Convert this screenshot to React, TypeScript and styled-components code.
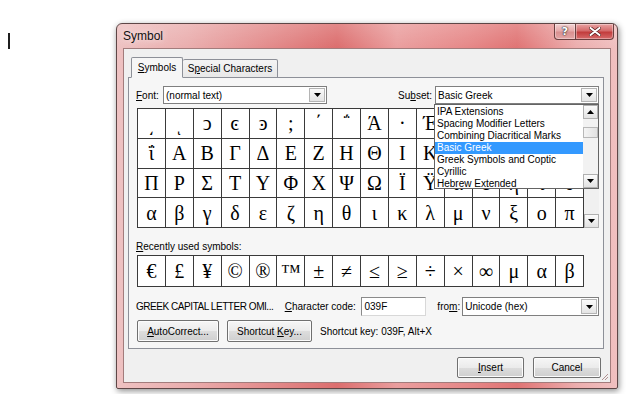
import React from 'react';
import styled, { createGlobalStyle } from 'styled-components';

const Global = createGlobalStyle`
  html, body { margin: 0; padding: 0; background: #fff; }
  body { font-family: "Liberation Sans", Arial, sans-serif; font-size: 10px; color: #000; }
  #root { width: 640px; height: 394px; overflow: hidden; }
  u { text-decoration: underline; text-underline-offset: 1px; }
`;

const Page = styled.div`
  width: 640px;
  height: 394px;
  display: flex;
  align-items: flex-start;
  background: #fff;
`;

const Caret = styled.div`
  width: 2px;
  height: 16px;
  background: #1e1e1e;
  margin: 33px 0 0 8px;
`;

const Window = styled.div`
  margin: 23px 0 0 106px;
  width: 502px;
  height: 366px;
  box-sizing: border-box;
  border: 1px solid #5e4646;
  border-radius: 6px 6px 2px 2px;
  display: flex;
  flex-direction: column;
  background:
    linear-gradient(180deg, rgba(255,255,255,0.18) 0px, rgba(255,255,255,0) 24px),
    linear-gradient(90deg, #eec2c2 0%, #eaaeae 14%, #e49090 28%, #dc6e6e 44%, #ea9e9e 56%, #e68888 70%, #e07474 80%, #ecaeae 92%, #f0c0c0 100%);
  box-shadow: 1px 2px 6px rgba(0,0,0,0.45);
  position: relative;
`;

const TitleBar = styled.div`
  height: 24px;
  display: flex;
  justify-content: space-between;
  align-items: flex-start;
  padding-left: 6px;
`;

const Title = styled.div`
  font-family: "Liberation Sans", Arial, sans-serif;
  font-size: 12px;
  line-height: 24px;
  color: #111;
  text-shadow: 0 0 6px rgba(255,255,255,0.9);
`;

const CaptionButtons = styled.div`
  display: flex;
  margin-right: 3px;
`;

const CaptionButton = styled.div<{ $close?: boolean }>`
  width: ${p => (p.$close ? 38 : 22)}px;
  height: 16px;
  box-sizing: border-box;
  border: 1px solid #6a3f3f;
  border-top: none;
  border-left: ${p => (p.$close ? 'none' : '1px solid #6a3f3f')};
  border-radius: ${p => (p.$close ? '0 0 4px 0' : '0 0 0 4px')};
  background: ${p =>
    p.$close
      ? 'linear-gradient(180deg, #e9a4a4 0%, #d46a6a 45%, #c23d3d 55%, #d66a6a 100%)'
      : 'linear-gradient(180deg, #f3d2d2 0%, #e6aaaa 45%, #d99090 55%, #e4a6a6 100%)'};
  display: flex;
  align-items: center;
  justify-content: center;
  box-shadow: inset 0 0 0 1px rgba(255,255,255,0.35);
`;

const HelpGlyph = styled.span`
  font-family: "DejaVu Sans", sans-serif;
  font-weight: bold;
  font-size: 11px;
  color: #fff;
  text-shadow: 0 0 1px #333, 0 0 1px #333, 0 0 2px #444;
`;

const Client = styled.div`
  margin: 0 6px 5px 6px;
  flex: 1;
  box-sizing: border-box;
  border: 1px solid #a27c7c;
  background: #f0f0f0;
  display: flex;
  flex-direction: column;
  padding: 8px 7px 0 4px;
  position: relative;
`;

const TabStrip = styled.div`
  display: flex;
  align-items: flex-end;
  padding-left: 3px;
  height: 21px;
  position: relative;
  z-index: 1;
  margin-bottom: -1px;
`;

const Tab = styled.div<{ $active?: boolean }>`
  box-sizing: border-box;
  height: ${p => (p.$active ? 21 : 19)}px;
  width: ${p => (p.$active ? 52 : 95)}px;
  border: 1px solid #8d9098;
  border-bottom: ${p => (p.$active ? '1px solid #f6f6f6' : '1px solid #8d9098')};
  border-left: ${p => (p.$active ? '1px solid #8d9098' : 'none')};
  background: ${p => (p.$active ? '#f6f6f6' : 'linear-gradient(180deg, #f4f4f4, #e8e8e8)')};
  border-radius: 2px 2px 0 0;
  display: flex;
  align-items: center;
  justify-content: center;
  font-size: 10px;
`;

const Panel = styled.div`
  box-sizing: border-box;
  width: 476px;
  height: 272px;
  border: 1px solid #8d9098;
  background: #f6f6f6;
  padding: 8px 4px 0 7px;
  display: flex;
  flex-direction: column;
  position: relative;
`;

const Row = styled.div<{ $mt?: number; $h?: number }>`
  display: flex;
  align-items: center;
  margin-top: ${p => p.$mt ?? 0}px;
  height: ${p => p.$h ?? 18}px;
`;

const Label = styled.span<{ $w?: number; $ml?: number; $tight?: boolean }>`
  display: inline-block;
  white-space: nowrap;
  ${p => (p.$w ? `width: ${p.$w}px;` : '')}
  margin-left: ${p => p.$ml ?? 0}px;
  font-size: 10px;
  letter-spacing: ${p => (p.$tight ? '-0.45px' : 'normal')};
`;

const Combo = styled.div<{ $w: number; $h?: number; $ml?: number }>`
  box-sizing: border-box;
  width: ${p => p.$w}px;
  height: ${p => p.$h ?? 18}px;
  margin-left: ${p => p.$ml ?? 0}px;
  border: 1px solid #7f7f7f;
  background: #fff;
  display: flex;
  align-items: center;
  padding-left: 2px;
  font-size: 10px;
`;

const ComboText = styled.span`
  flex: 1;
  white-space: nowrap;
  overflow: hidden;
`;

const ArrowBox = styled.div<{ $w?: number }>`
  box-sizing: border-box;
  width: ${p => p.$w ?? 16}px;
  align-self: stretch;
  margin: 1px;
  border: 1px solid #b4b4b4;
  background: linear-gradient(180deg, #fafafa, #e4e4e4);
  display: flex;
  align-items: center;
  justify-content: center;
`;

const Tri = ({ up }: { up?: boolean }) => (
  <svg width="7" height="4" viewBox="0 0 7 4">
    <path d={up ? 'M0 4 L7 4 L3.5 0 Z' : 'M0 0 L7 0 L3.5 4 Z'} fill="#000" />
  </svg>
);

const GridArea = styled.div<{ $mt?: number }>`
  display: flex;
  margin-top: ${p => p.$mt ?? 4}px;
  margin-left: 1px;
`;

const SymGrid = styled.div<{ $rowH: number }>`
  display: grid;
  width: 446px;
  grid-template-columns: repeat(16, 1fr);
  grid-auto-rows: ${p => p.$rowH}px;
  border-top: 1px solid #3a3a3a;
  border-left: 1px solid #3a3a3a;
  background: #fff;
`;

const Cell = styled.div`
  border-right: 1px solid #3a3a3a;
  border-bottom: 1px solid #3a3a3a;
  display: flex;
  align-items: center;
  justify-content: center;
  font-family: "Liberation Serif", "DejaVu Serif", "Times New Roman", serif;
  font-size: 20px;
  line-height: 1;
  color: #000;
  overflow: hidden;
`;

const VScroll = styled.div`
  width: 15px;
  display: flex;
  flex-direction: column;
  justify-content: flex-end;
  background: #f0f0f0;
`;

const ScrollBtn = styled.div<{ $h?: number }>`
  box-sizing: border-box;
  height: ${p => p.$h ?? 14}px;
  border: 1px solid #b0b0b0;
  background: linear-gradient(180deg, #fbfbfb, #e2e2e2);
  display: flex;
  align-items: center;
  justify-content: center;
`;

const ListBox = styled.div`
  position: absolute;
  left: 305px;
  top: 26px;
  width: 165px;
  height: 85px;
  box-sizing: border-box;
  border: 1px solid #646464;
  background: #fff;
  display: flex;
  z-index: 3;
`;

const ListItems = styled.div`
  flex: 1;
  display: flex;
  flex-direction: column;
  padding-top: 1px;
`;

const ListItem = styled.div<{ $sel?: boolean }>`
  height: 12px;
  line-height: 12px;
  padding-left: 2px;
  font-size: 10px;
  white-space: nowrap;
  background: ${p => (p.$sel ? '#3399ff' : 'transparent')};
  color: ${p => (p.$sel ? '#fff' : '#000')};
`;

const ListScroll = styled.div`
  width: 15px;
  display: flex;
  flex-direction: column;
  background: #f2f2f2;
`;

const Thumb = styled.div`
  margin-top: 8px;
  height: 11px;
  box-sizing: border-box;
  border: 1px solid #b8b8b8;
  background: linear-gradient(90deg, #f4f4f4, #e2e2e2);
`;

const Spacer = styled.div`
  flex: 1;
`;

const TextInput = styled.div<{ $w: number; $ml?: number }>`
  box-sizing: border-box;
  width: ${p => p.$w}px;
  height: 19px;
  margin-left: ${p => p.$ml ?? 0}px;
  border: 1px solid #8a8a8a;
  border-right-color: #d8d8d8;
  border-bottom-color: #d8d8d8;
  background: #fff;
  display: flex;
  align-items: center;
  padding-left: 3px;
  font-size: 10px;
`;

const Button = styled.div<{ $w: number; $h?: number; $ml?: number }>`
  box-sizing: border-box;
  width: ${p => p.$w}px;
  height: ${p => p.$h ?? 22}px;
  margin-left: ${p => p.$ml ?? 0}px;
  border: 1px solid #707070;
  border-radius: 2px;
  background: linear-gradient(180deg, #f6f6f6 0%, #ebebeb 50%, #dddddd 51%, #cfcfcf 100%);
  box-shadow: inset 0 0 0 1px #fcfcfc;
  display: flex;
  align-items: center;
  justify-content: center;
  font-size: 10px;
  white-space: nowrap;
`;

const BottomBar = styled.div`
  display: flex;
  justify-content: flex-end;
  margin-top: 8px;
  padding-right: 2px;
`;

const Grip = styled.svg`
  position: absolute;
  right: 1px;
  bottom: 1px;
`;

const grid = [
  ['\u0375', '\u037A', '\u037B', '\u037C', '\u037D', '\u037E', '\u0384', '\u0385', 'Ά', '·', 'Έ', 'Ή', 'Ί', 'Ό', 'Ύ', 'Ώ'],
  ['ΐ', 'Α', 'Β', 'Γ', 'Δ', 'Ε', 'Ζ', 'Η', 'Θ', 'Ι', 'Κ', 'Λ', 'Μ', 'Ν', 'Ξ', 'Ο'],
  ['Π', 'Ρ', 'Σ', 'Τ', 'Υ', 'Φ', 'Χ', 'Ψ', 'Ω', 'Ϊ', 'Ϋ', 'ά', 'έ', 'ή', 'ί', 'ΰ'],
  ['α', 'β', 'γ', 'δ', 'ε', 'ζ', 'η', 'θ', 'ι', 'κ', 'λ', 'μ', 'ν', 'ξ', 'ο', 'π'],
];

// cells that lie entirely under the open Subset list are not visible
const isCovered = (r: number, c: number) => r < 2 && c >= 11;

const recent = ['€', '£', '¥', '©', '®', '™', '±', '≠', '≤', '≥', '÷', '×', '∞', 'μ', 'α', 'β'];

const subsets = [
  'IPA Extensions',
  'Spacing Modifier Letters',
  'Combining Diacritical Marks',
  'Basic Greek',
  'Greek Symbols and Coptic',
  'Cyrillic',
  'Hebrew Extended',
];

export default function App() {
  return (
    <Page>
      <Global />
      <Caret />
      <Window>
        <TitleBar>
          <Title>Symbol</Title>
          <CaptionButtons>
            <CaptionButton>
              <HelpGlyph>?</HelpGlyph>
            </CaptionButton>
            <CaptionButton $close>
              <svg width="12" height="9" viewBox="0 0 12 9">
                <path d="M1.5 1 L10.5 8 M10.5 1 L1.5 8" stroke="#5a2020" strokeWidth="3.4" strokeLinecap="round" />
                <path d="M1.5 1 L10.5 8 M10.5 1 L1.5 8" stroke="#fff" strokeWidth="2" strokeLinecap="round" />
              </svg>
            </CaptionButton>
          </CaptionButtons>
        </TitleBar>
        <Client>
          <TabStrip>
            <Tab $active>
              <span><u>S</u>ymbols</span>
            </Tab>
            <Tab>
              <span>S<u>p</u>ecial Characters</span>
            </Tab>
          </TabStrip>
          <Panel>
            <Row>
              <Label $w={27}><u>F</u>ont:</Label>
              <Combo $w={164}>
                <ComboText>(normal text)</ComboText>
                <ArrowBox><Tri /></ArrowBox>
              </Combo>
              <Spacer />
              <Label>Su<u>b</u>set:</Label>
              <Combo $w={164} $ml={3}>
                <ComboText>Basic Greek</ComboText>
                <ArrowBox><Tri /></ArrowBox>
              </Combo>
            </Row>
            <GridArea>
              <SymGrid $rowH={29.75}>
                {grid.map((row, r) =>
                  row.map((c, i) => <Cell key={`${r}-${i}`}>{isCovered(r, i) ? '' : c}</Cell>)
                )}
              </SymGrid>
              <VScroll>
                <ScrollBtn><Tri /></ScrollBtn>
              </VScroll>
            </GridArea>
            <Row $mt={12} $h={12}>
              <Label><u>R</u>ecently used symbols:</Label>
            </Row>
            <GridArea $mt={3}>
              <SymGrid $rowH={31}>
                {recent.map((c, i) => (
                  <Cell key={i}>{c}</Cell>
                ))}
              </SymGrid>
            </GridArea>
            <Row $mt={10} $h={19}>
              <Label $w={149} $tight>GREEK CAPITAL LETTER OMI...</Label>
              <Label $w={76}><u>C</u>haracter code:</Label>
              <TextInput $w={66}>039F</TextInput>
              <Label $ml={11} $w={25}>fro<u>m</u>:</Label>
              <Combo $w={137} $h={19}>
                <ComboText>Unicode (hex)</ComboText>
                <ArrowBox><Tri /></ArrowBox>
              </Combo>
            </Row>
            <Row $mt={4} $h={22}>
              <Button $w={82} $ml={1}><span><u>A</u>utoCorrect...</span></Button>
              <Button $w={85} $ml={8}><span>Shortcut <u>K</u>ey...</span></Button>
              <Label $ml={8}>Shortcut key: 039F, Alt+X</Label>
            </Row>
            <ListBox>
              <ListItems>
                {subsets.map(s => (
                  <ListItem key={s} $sel={s === 'Basic Greek'}>{s}</ListItem>
                ))}
              </ListItems>
              <ListScroll>
                <ScrollBtn><Tri up /></ScrollBtn>
                <Thumb />
                <Spacer />
                <ScrollBtn><Tri /></ScrollBtn>
              </ListScroll>
            </ListBox>
          </Panel>
          <BottomBar>
            <Button $w={67} $h={21}><span><u>I</u>nsert</span></Button>
            <Button $w={68} $h={21} $ml={9}>Cancel</Button>
          </BottomBar>
          <Grip width="8" height="8" viewBox="0 0 8 8">
            <path d="M7 1 L1 7 M7 4 L4 7" stroke="#b09090" strokeWidth="1" />
          </Grip>
        </Client>
      </Window>
    </Page>
  );
}
